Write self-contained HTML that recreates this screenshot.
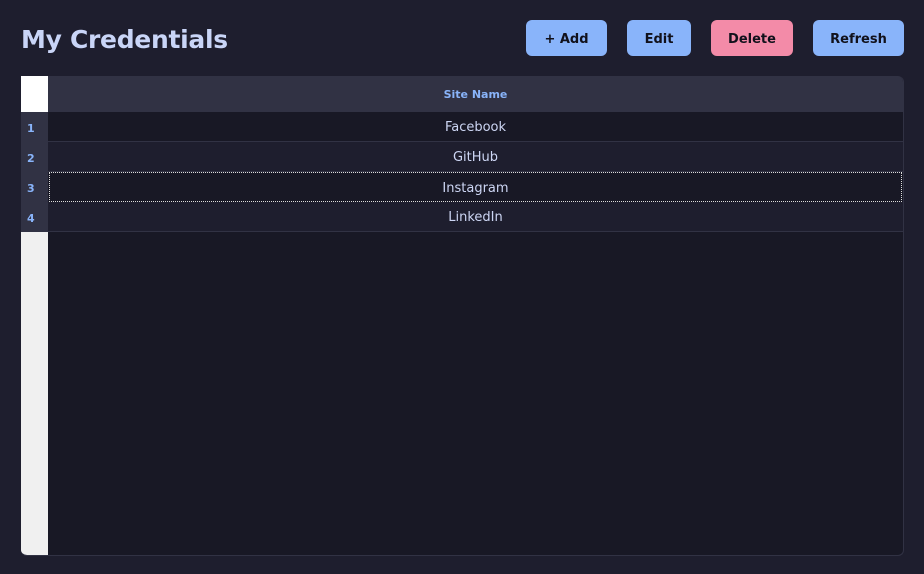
<!DOCTYPE html>
<html><head><style>
*{margin:0;padding:0;box-sizing:border-box}
body{width:924px;height:574px;background:#1e1e2e;font-family:"DejaVu Sans","Liberation Sans",sans-serif;position:relative;overflow:hidden}
h1{position:absolute;left:21px;top:25px;font-size:25px;font-weight:bold;color:#c9d5f7;letter-spacing:-0.3px}
.btn{position:absolute;top:20px;height:36px;border-radius:6px;background:#89b4fa;color:#11111b;font-weight:bold;font-size:13px;display:flex;align-items:center;justify-content:center;padding-top:2px}
.tbl{position:absolute;left:21px;top:76px;width:883px;height:480px;background:#181825;border-radius:0 6px 6px 6px;overflow:hidden;border-right:1px solid #313244;border-bottom:1px solid #313244}
.rh{position:absolute;left:0;top:0;width:27px;height:480px;background:#f0f0f0}
.hd{position:absolute;left:27px;top:0;right:0;height:36px;background:#313244;color:#89b4fa;font-weight:bold;font-size:11px;display:flex;align-items:center;justify-content:center}
.corner{position:absolute;left:0;top:0;width:27px;height:36px;background:#fff}
.row{position:absolute;left:27px;right:0;height:30px;color:#cdd6f4;font-size:13px;display:flex;align-items:center;justify-content:center;border-bottom:1px solid #313244;padding-top:2px}
.num{position:absolute;left:0;width:27px;height:30px;background:#313244;color:#89b4fa;font-size:11px;font-weight:bold;display:flex;align-items:center;padding-left:6px;padding-top:2px}
</style></head><body>
<h1>My Credentials</h1>
<div class="btn" style="left:526px;width:81px">+ Add</div>
<div class="btn" style="left:627px;width:64px">Edit</div>
<div class="btn" style="left:711px;width:82px;background:#f38ba8">Delete</div>
<div class="btn" style="left:813px;width:91px">Refresh</div>
<div class="tbl">
<div class="rh"></div>
<div class="corner"></div>
<div class="hd">Site Name</div>
<div class="num" style="top:36px">1</div><div class="row" style="top:36px;background:#181825">Facebook</div>
<div class="num" style="top:66px">2</div><div class="row" style="top:66px;background:#1e1e2e">GitHub</div>
<div class="num" style="top:96px">3</div><div class="row" style="top:96px;background:#181825;border:1px dotted #ddd;left:28px;right:1px">Instagram</div>
<div class="num" style="top:126px">4</div><div class="row" style="top:126px;background:#1e1e2e">LinkedIn</div>
</div>
</body></html>
